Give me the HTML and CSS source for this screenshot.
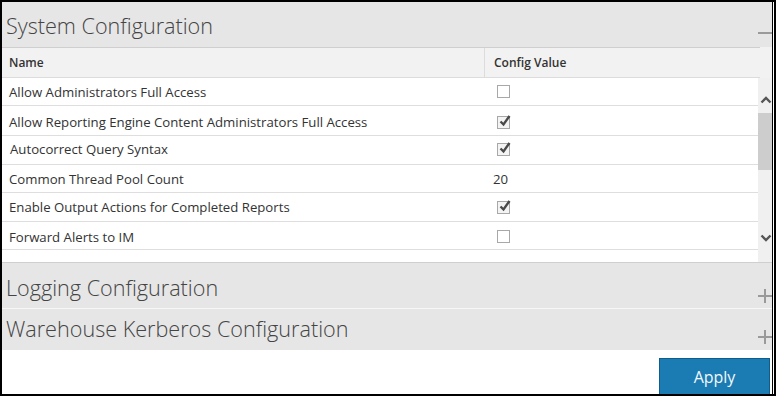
FILE: index.html
```html
<!DOCTYPE html>
<html>
<head>
<meta charset="utf-8">
<link rel="stylesheet" href="styles.css">
</head>
<body>
<div class="frame">
  <div class="inner">
    <section class="panel">
      <div class="panel-head head-system">
        <h2 class="panel-title">System Configuration</h2>
        <span class="toggle minus"></span>
      </div>
      <div class="table">
        <div class="thead">
          <div class="thead-cols">
            <div class="th th-name">Name</div>
            <div class="th th-val">Config Value</div>
          </div>
          <div class="thead-gap"></div>
        </div>
        <div class="tbody">
          <div class="rows">
            <div class="row r1"><div class="td name">Allow Administrators Full Access</div><div class="td val"><span class="cb"></span></div></div>
            <div class="row r2"><div class="td name">Allow Reporting Engine Content Administrators Full Access</div><div class="td val"><span class="cb checked"><svg viewBox="0 0 16 16" width="16" height="16"><path d="M3.5 7.5 L6.5 10.5 L12.5 2" fill="none" stroke="#4a4a4a" stroke-width="2.4"/></svg></span></div></div>
            <div class="row r3"><div class="td name shift">Autocorrect Query Syntax</div><div class="td val"><span class="cb checked"><svg viewBox="0 0 16 16" width="16" height="16"><path d="M3.5 7.5 L6.5 10.5 L12.5 2" fill="none" stroke="#4a4a4a" stroke-width="2.4"/></svg></span></div></div>
            <div class="row r4"><div class="td name">Common Thread Pool Count</div><div class="td val num">20</div></div>
            <div class="row r5"><div class="td name">Enable Output Actions for Completed Reports</div><div class="td val"><span class="cb checked"><svg viewBox="0 0 16 16" width="16" height="16"><path d="M3.5 7.5 L6.5 10.5 L12.5 2" fill="none" stroke="#4a4a4a" stroke-width="2.4"/></svg></span></div></div>
            <div class="row r6"><div class="td name">Forward Alerts to IM</div><div class="td val"><span class="cb"></span></div></div>
            <div class="row r7"></div>
          </div>
          <div class="scrollbar">
            <svg class="arrow up" viewBox="0 0 12 8" width="12" height="8"><path d="M1.5 6.5 L6 2 L10.5 6.5" fill="none" stroke="#555" stroke-width="2.4"/></svg>
            <div class="thumb"></div>
            <div class="track-fill"></div>
            <svg class="arrow down" viewBox="0 0 12 8" width="12" height="8"><path d="M1.5 1.5 L6 6 L10.5 1.5" fill="none" stroke="#555" stroke-width="2.4"/></svg>
          </div>
        </div>
      </div>
    </section>
    <section class="panel collapsed head-logging">
      <h2 class="panel-title">Logging Configuration</h2>
      <span class="toggle plus"></span>
    </section>
    <section class="panel collapsed head-warehouse">
      <h2 class="panel-title">Warehouse Kerberos Configuration</h2>
      <span class="toggle plus"></span>
    </section>
    <div class="actions">
      <button class="apply">Apply</button>
    </div>
  </div>
</div>
</body>
</html>
```

FILE: styles.css
```css
html, body {
  margin: 0;
  padding: 0;
  background: #fff;
}

body {
  font-family: "Open Sans", "Liberation Sans", sans-serif;
  color: #333;
}

.frame {
  width: 776px;
  height: 396px;
  box-sizing: border-box;
  border: 2px solid #000;
  padding-right: 1px;
  background: #fff;
  overflow: hidden;
}

.inner {
  height: 100%;
  border-right: 1px solid #000;
  display: flex;
  flex-direction: column;
}

.panel {
  flex: none;
}

.panel-head,
.collapsed {
  background: #e6e6e6;
  display: flex;
  justify-content: space-between;
  align-items: flex-end;
}

.panel-title {
  margin: 0;
  font-weight: 300;
  font-size: 21.6px;
  line-height: 26px;
  color: #444;
  padding-left: 4px;
  align-self: flex-start;
}

.head-system {
  height: 45px;
}
.head-system .panel-title {
  padding-top: 11px;
}

.head-logging {
  height: 45px;
  border-bottom: 1px solid #f7f7f7;
}
.head-logging .panel-title {
  padding-top: 12px;
}

.head-warehouse {
  height: 41px;
}
.head-warehouse .panel-title {
  padding-top: 7px;
}

.toggle {
  position: relative;
  width: 14px;
  height: 14px;
  flex: none;
}
.toggle::before,
.toggle::after {
  content: "";
  position: absolute;
  background: #9a9a9a;
}
.toggle::before {
  left: 0;
  right: 0;
  top: 6px;
  height: 2px;
}
.plus::after {
  top: 0;
  bottom: 0;
  left: 6px;
  width: 2px;
}
.head-system .minus {
  margin-bottom: 7px;
}
.head-logging .plus {
  margin-bottom: 5px;
}
.head-warehouse .plus {
  margin-bottom: 6px;
}

/* table */
.thead {
  display: flex;
  background: #f2f2f2;
}
.thead-cols {
  width: 758px;
  display: grid;
  grid-template-columns: 482px 1fr;
  border-top: 1px solid #cfcfcf;
  border-bottom: 1px solid #dcdcdc;
  height: 29px;
}
.thead-gap {
  flex: 1;
}
.th {
  font-size: 12px;
  font-weight: 600;
  color: #333;
  display: flex;
  align-items: center;
  padding-left: 7px;
}
.th-val {
  border-left: 1px solid #dcdcdc;
  padding-left: 9px;
}

.tbody {
  display: flex;
  height: 184px;
  border-bottom: 1px solid #cfcfcf;
  overflow: hidden;
}
.rows {
  width: 758px;
}
.row {
  display: grid;
  grid-template-columns: 483px 1fr;
  border-bottom: 1px solid #dedede;
  box-sizing: border-box;
}
.r1 { height: 28px; }
.r2 { height: 30px; padding-top: 3px; }
.r3 { height: 29px; padding-bottom: 2px; }
.r4 { height: 28px; }
.r5 { height: 29px; }
.r6 { height: 28px; padding-top: 2px; }
.r7 { height: 13px; border-bottom: none; }

.td {
  font-size: 13.2px;
  color: #333;
  display: flex;
  align-items: center;
}
.name {
  padding-left: 7px;
}
.name.shift {
  padding-left: 8px;
}
.val {
  padding-left: 12px;
}
.val.num {
  padding-left: 8px;
}

.cb {
  position: relative;
  width: 11px;
  height: 11px;
  border: 1px solid #a8a8a8;
  background: #fff;
  display: block;
}
.cb.checked {
  background: #f4f4f4;
}
.cb svg {
  position: absolute;
  left: -1px;
  top: -3px;
}

.scrollbar {
  flex: 1;
  background: #f0f0f0;
  display: flex;
  flex-direction: column;
  align-items: center;
}
.arrow {
  flex: none;
  display: block;
}
.arrow.up {
  margin-top: 18px;
  margin-left: 2px;
}
.thumb {
  width: 100%;
  height: 57px;
  margin-top: 9px;
  background: #cdcdcd;
}
.track-fill {
  flex: 1;
}
.arrow.down {
  margin-bottom: 20px;
  margin-left: 2px;
}

.actions {
  flex: 1 1 0;
  min-height: 0;
  overflow: hidden;
  display: flex;
  justify-content: flex-end;
  align-items: flex-start;
  padding-right: 2px;
  padding-top: 8px;
}
.apply {
  flex: none;
  width: 111px;
  height: 40px;
  background: #1b7bb3;
  border: 1px solid #0f5d8b;
  color: #f2f8fc;
  font-family: "Open Sans", "Liberation Sans", sans-serif;
  font-size: 16px;
  padding: 0 0 2px;
  margin: 0;
}
```
